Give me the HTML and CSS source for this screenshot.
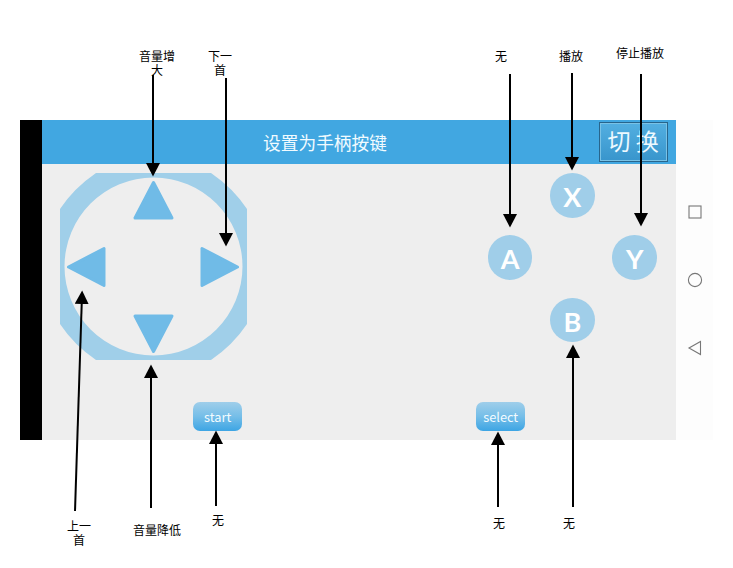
FILE: index.html
```html
<!DOCTYPE html>
<html lang="zh-CN">
<head>
<meta charset="utf-8">
<title>设置为手柄按键</title>
<link rel="stylesheet" href="styles.css">
</head>
<body>
<main class="figure">
  <section class="device">
    <div class="bezel"></div>
    <div class="app">
      <header class="bar">
        <h1 class="title">设置为手柄按键</h1>
        <button class="switch">切 换</button>
      </header>
      <div class="controls">
        <svg class="dpad" viewBox="0 0 187 187">
          <path class="ring" fill-rule="evenodd" d="M36 0H151Q173 15 187 36V151Q173 172 151 187H36Q14 172 0 151V36Q14 15 36 0ZM93.500 4.500A89 89 0 1 0 93.500 182.500A89 89 0 1 0 93.500 4.500Z"/>
          <g class="dirs">
            <path d="M93.500 9.500L112 45H75Z"/>
            <path d="M93.500 178.500L112 143H75Z"/>
            <path d="M8.500 94L44 75.500V112.500Z"/>
            <path d="M177.500 94L142 75.500V112.500Z"/>
          </g>
        </svg>
        <div class="pad">
          <button class="key x">X</button>
          <button class="key a">A</button>
          <button class="key y">Y</button>
          <button class="key b">B</button>
        </div>
      </div>
      <div class="options">
        <button class="option">start</button>
        <button class="option">select</button>
      </div>
    </div>
    <nav class="system">
      <svg viewBox="0 0 16 16"><rect x="2" y="2" width="12" height="12"/></svg>
      <svg viewBox="0 0 16 16"><circle cx="8" cy="8" r="6.600"/></svg>
      <svg viewBox="0 0 16 16"><path d="M2 8L13.500 1.500V14.500Z"/></svg>
    </nav>
  </section>

  <svg class="arrows" viewBox="0 0 733 568">
    <defs>
      <marker id="head" markerUnits="userSpaceOnUse" markerWidth="14" markerHeight="14" refX="0" refY="7" orient="auto">
        <path d="M0 0L13.500 7L0 14Z"/>
      </marker>
    </defs>
    <path d="M153 75V163"/>
    <path d="M226 78V233"/>
    <path d="M510 74V214"/>
    <path d="M572 73V157"/>
    <path d="M641 74V213"/>
    <path d="M75 511L81.700 304"/>
    <path d="M151 508V378"/>
    <path d="M216 506V444"/>
    <path d="M498 507V445"/>
    <path d="M573 507V358"/>
  </svg>

  <p class="note vol-up">音量增<br>大</p>
  <p class="note next">下一<br>首</p>
  <p class="note for-a">无</p>
  <p class="note for-x">播放</p>
  <p class="note for-y">停止播放</p>
  <p class="note prev">上一<br>首</p>
  <p class="note vol-down">音量降低</p>
  <p class="note for-start">无</p>
  <p class="note for-select">无</p>
  <p class="note for-b">无</p>
</main>
</body>
</html>
```
FILE: styles.css
```css
* { box-sizing: border-box; }

body {
  margin: 0;
  background: #fff;
  font-family: "Noto Sans CJK SC", sans-serif;
}

button {
  border: 0;
  padding: 0;
  font: inherit;
  color: #fff;
}

.figure {
  position: relative;
  width: 733px;
  height: 568px;
  padding: 120px 20px 0;
  overflow: hidden;
}

.device {
  display: grid;
  grid-template-columns: 22.400px 634px 1fr;
  height: 320px;
}

.bezel { background: #000; }

.app {
  display: flex;
  flex-direction: column;
  background: #eee;
}

.bar {
  display: grid;
  grid-template-columns: 1fr 69px;
  align-items: center;
  height: 44.400px;
  padding-right: 8.800px;
  background: #41a7e1;
}

.title {
  margin: 0;
  padding: 0 0 1px 9px;
  font-size: 17.700px;
  font-weight: 400;
  line-height: 26px;
  text-align: center;
  color: #f1fbff;
}

.switch {
  height: 40px;
  padding-bottom: 4px;
  border: 1px solid #28658c;
  background: linear-gradient(#53afe1, #3895cc);
  box-shadow: inset 0 0 0 1px #79c2e6;
  font-size: 23px;
  line-height: 34px;
  color: #edf9ff;
}

.controls {
  display: flex;
  justify-content: space-between;
  padding: 8.800px 19.400px 0 17.600px;
}

.dpad {
  width: 187px;
  height: 187px;
}

.ring { fill: #a0cfe9; }

.dirs {
  fill: #70bbe7;
  stroke: #70bbe7;
  stroke-width: 3px;
  stroke-linejoin: round;
}

.pad {
  display: grid;
  grid-template: repeat(3, 62.300px) / repeat(3, 62.300px);
  width: 169.200px;
  height: 170px;
}

.key {
  width: 44.600px;
  height: 44.600px;
  padding-top: 3px;
  border-radius: 50%;
  background: #a0cee9;
  font: 700 27px/42px Lato, sans-serif;
}

.x { grid-area: 1 / 2; }
.a { grid-area: 2 / 1; }
.y { grid-area: 2 / 3; }
.b { grid-area: 3 / 2; }

.options {
  display: flex;
  gap: 234px;
  padding: 41.500px 0 0 150.800px;
}

.option {
  width: 49px;
  height: 29.500px;
  border-radius: 7px;
  background: linear-gradient(#9fceea, #75bee8 50%, #3da5e4);
  font: 400 12.800px/30px "Noto Sans CJK SC", sans-serif;
  color: #f3fbff;
}

.system {
  display: flex;
  flex-direction: column;
  align-items: center;
  gap: 52px;
  padding-top: 84px;
  background: #fdfdfd;
}

.system svg {
  width: 16px;
  height: 16px;
  fill: none;
  stroke: #777;
  stroke-width: 1.100px;
}

.arrows {
  position: absolute;
  inset: 0;
  width: 733px;
  height: 568px;
}

.arrows > path {
  fill: none;
  stroke: #000;
  stroke-width: 2px;
  marker-end: url(#head);
}

.note {
  position: absolute;
  margin: 0;
  transform: translateX(-50%);
  font-size: 12px;
  line-height: 14px;
  text-align: center;
  white-space: nowrap;
  color: #000;
}

.vol-up { left: 157px; top: 49px; }
.next { left: 220px; top: 49px; }
.for-a { left: 501px; top: 49px; }
.for-x { left: 571px; top: 49px; }
.for-y { left: 640px; top: 46px; }
.prev { left: 79px; top: 519px; }
.vol-down { left: 157px; top: 523px; }
.for-start { left: 218px; top: 513px; }
.for-select { left: 499px; top: 516px; }
.for-b { left: 569px; top: 516px; }
```
